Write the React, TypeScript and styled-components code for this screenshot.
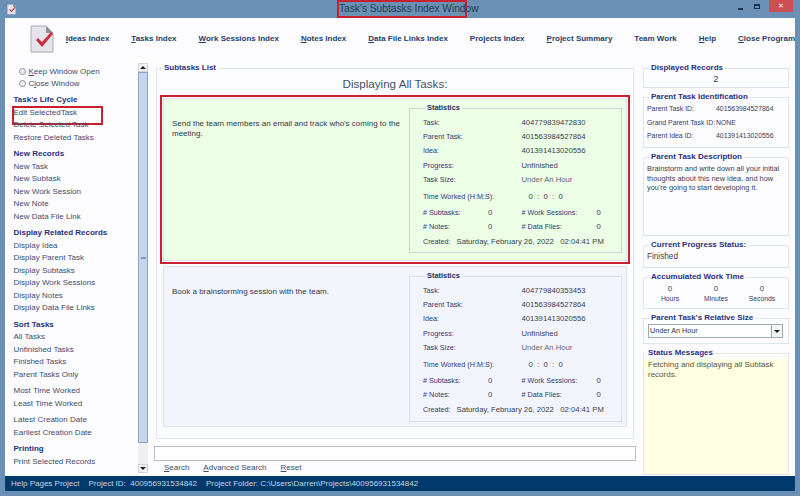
import React from 'react';
import styled, { createGlobalStyle } from 'styled-components';

const GlobalStyle = createGlobalStyle`
  html, body {
    margin: 0;
    padding: 0;
    width: 800px;
    height: 496px;
    overflow: hidden;
    font-family: 'Liberation Sans', Arial, sans-serif;
  }
  * { box-sizing: border-box; }
  u { text-decoration-thickness: 1px; text-underline-offset: 1px; }
`;

const toolbarLinks = [
  ['I', 'deas Index'],
  ['T', 'asks Index'],
  ['W', 'ork Sessions Index'],
  ['N', 'otes Index'],
  ['D', 'ata File Links Index'],
  ['', 'Projects Index'],
  ['P', 'roject Summary'],
  ['', 'Team Work'],
  ['H', 'elp'],
  ['C', 'lose Program'],
];

const navGroups: { title?: string; items: string[] }[] = [
  { title: "Task's Life Cycle", items: ['Edit SelectedTask', 'Delete Selected Task', 'Restore Deleted Tasks'] },
  { title: 'New Records', items: ['New Task', 'New Subtask', 'New Work Session', 'New Note', 'New Data File Link'] },
  {
    title: 'Display Related Records',
    items: ['Display Idea', 'Display Parent Task', 'Display Subtasks', 'Display Work Sessions', 'Display Notes', 'Display Data File Links'],
  },
  { title: 'Sort Tasks', items: ['All Tasks', 'Unfinished Tasks', 'Finished Tasks', 'Parent Tasks Only'] },
  { items: ['Most Time Worked', 'Least Time Worked'] },
  { items: ['Latest Creation Date', 'Earliest Creation Date'] },
  { title: 'Printing', items: ['Print Selected Records'] },
];

const tasks = [
  {
    id: '404779839472830',
    text: "Send the team members an email and track who's coming to the meeting.",
    selected: true,
  },
  {
    id: '404779840353453',
    text: 'Book a brainstorming session with the team.',
    selected: false,
  },
];

const DocIcon = ({ size }: { size: number }) => (
  <svg width={size} height={size * 1.17} viewBox="0 0 24 28">
    <path d="M1 1h15l7 7v19H1z" fill="#e4e4ea" stroke="#a9aab4" strokeWidth="1" />
    <path d="M16 1v7h7z" fill="#8e9099" />
    <path d="M6 15l2-2 4 4 9-10 2 2-11 13z" fill="#c8303f" />
  </svg>
);

const TaskCard = ({ task }: { task: (typeof tasks)[number] }) => (
  <CardFrame $selected={task.selected}>
    <Card $selected={task.selected}>
      <CardText>{task.text}</CardText>
      <StatsBox $selected={task.selected}>
        <Legend $small>Statistics</Legend>
        <StatRow>
          <StatLabel>Task:</StatLabel>
          <StatValue>{task.id}</StatValue>
        </StatRow>
        <StatRow>
          <StatLabel>Parent Task:</StatLabel>
          <StatValue>401563984527864</StatValue>
        </StatRow>
        <StatRow>
          <StatLabel>Idea:</StatLabel>
          <StatValue>401391413020556</StatValue>
        </StatRow>
        <StatRow>
          <StatLabel>Progress:</StatLabel>
          <StatValue>Unfinished</StatValue>
        </StatRow>
        <StatRow>
          <StatLabel>Task Size:</StatLabel>
          <StatValue $muted>Under An Hour</StatValue>
        </StatRow>
        <StatRow $spaced>
          <StatLabel>Time Worked (H:M:S):</StatLabel>
          <TimeValue>0 &nbsp;:&nbsp; 0 &nbsp;:&nbsp; 0</TimeValue>
        </StatRow>
        <StatRow $spaced>
          <CountLabel>
            # Subtasks:
          </CountLabel>
          <CountValue>0</CountValue>
          <CountLabelWide># Work Sessions:</CountLabelWide>
          <StatValue>0</StatValue>
        </StatRow>
        <StatRow>
          <CountLabel># Notes:</CountLabel>
          <CountValue>0</CountValue>
          <CountLabelWide># Data Files:</CountLabelWide>
          <StatValue>0</StatValue>
        </StatRow>
        <StatRow>
          <CreatedLabel>Created:</CreatedLabel>
          <StatValue>Saturday, February 26, 2022 &nbsp; 02:04:41 PM</StatValue>
        </StatRow>
      </StatsBox>
    </Card>
  </CardFrame>
);

const App = () => (
  <Frame>
    <GlobalStyle />
    <TitleBar>
      <AppIcon>
        <DocIcon size={9} />
      </AppIcon>
      <TitleBox>Task's Subtasks Index Window</TitleBox>
      <WindowButtons>
        <Minimize />
        <Maximize />
        <CloseButton>✕</CloseButton>
      </WindowButtons>
    </TitleBar>
    <Body>
      <Toolbar>
        <ToolbarIcon>
          <DocIcon size={24} />
        </ToolbarIcon>
        <ToolbarLinks>
          {toolbarLinks.map(([key, rest]) => (
            <ToolbarLink key={key + rest}>
              {key && <u>{key}</u>}
              {rest}
            </ToolbarLink>
          ))}
        </ToolbarLinks>
      </Toolbar>
      <Main>
        <Nav>
          <NavGroup>
            <RadioRow>
              <Radio />
              <span>
                <u>K</u>eep Window Open
              </span>
            </RadioRow>
            <RadioRow>
              <Radio />
              <span>
                C<u>l</u>ose Window
              </span>
            </RadioRow>
          </NavGroup>
          {navGroups.map((group, index) => (
            <NavGroup key={index}>
              {group.title && <NavTitle>{group.title}</NavTitle>}
              {group.items.map((item) => (
                <NavItem key={item} $marked={item === 'Edit SelectedTask'}>
                  {item}
                </NavItem>
              ))}
            </NavGroup>
          ))}
        </Nav>
        <ScrollBar>
          <ScrollButton>
            <ArrowUp />
          </ScrollButton>
          <ScrollThumb>
            <ThumbGrip />
          </ScrollThumb>
          <ScrollTrack />
          <ScrollButton>
            <ArrowDown />
          </ScrollButton>
        </ScrollBar>
        <Center>
          <ListBox>
            <Legend>Subtasks List</Legend>
            <ListHeading>Displaying All Tasks:</ListHeading>
            {tasks.map((task) => (
              <TaskCard key={task.id} task={task} />
            ))}
          </ListBox>
          <SearchInput />
          <SearchLinks>
            <SearchLink>
              <u>S</u>earch
            </SearchLink>
            <SearchLink>
              <u>A</u>dvanced Search
            </SearchLink>
            <SearchLink>
              <u>R</u>eset
            </SearchLink>
          </SearchLinks>
        </Center>
        <Side>
          <SideBox $height={25}>
            <Legend>Displayed Records</Legend>
            <RecordCount>2</RecordCount>
          </SideBox>
          <SideBox $height={56}>
            <Legend>Parent Task Identification</Legend>
            <IdRow>
              <IdLabel>Parent Task ID:</IdLabel>
              <IdValue>401563984527864</IdValue>
            </IdRow>
            <IdRow>
              <IdLabel>Grand Parent Task ID:</IdLabel>
              <IdValue>NONE</IdValue>
            </IdRow>
            <IdRow>
              <IdLabel>Parent Idea ID:</IdLabel>
              <IdValue>401391413020556</IdValue>
            </IdRow>
          </SideBox>
          <SideBox $height={84}>
            <Legend>Parent Task Description</Legend>
            <SideText>
              Brainstorm and write down all your initial thoughts about this new idea, and how you're going to start developing it.
            </SideText>
          </SideBox>
          <SideBox $height={28}>
            <Legend>Current Progress Status:</Legend>
            <StatusValue>Finished</StatusValue>
          </SideBox>
          <SideBox $height={37}>
            <Legend>Accumulated Work Time</Legend>
            <WorkTime>
              {['Hours', 'Minutes', 'Seconds'].map((unit) => (
                <WorkUnit key={unit}>
                  <span>0</span>
                  <WorkUnitLabel>{unit}</WorkUnitLabel>
                </WorkUnit>
              ))}
            </WorkTime>
          </SideBox>
          <SideBox $height={31}>
            <Legend>Parent Task's Relative Size</Legend>
            <Combo>
              <ComboText>Under An Hour</ComboText>
              <ComboButton>
                <ArrowDown />
              </ComboButton>
            </Combo>
          </SideBox>
          <MessageBox>
            <Legend>Status Messages</Legend>
            <MessageText>Fetching and displaying all Subtask records.</MessageText>
          </MessageBox>
        </Side>
      </Main>
      <StatusBar>
        <span>Help Pages Project</span>
        <span>Project ID: &nbsp;400956931534842</span>
        <span>Project Folder: C:\Users\Darren\Projects\400956931534842</span>
      </StatusBar>
    </Body>
  </Frame>
);

export default App;

const Frame = styled.div`
  width: 800px;
  height: 496px;
  background: #6b90b5;
  display: flex;
  flex-direction: column;
  overflow: hidden;
`;

const TitleBar = styled.div`
  height: 18px;
  flex: none;
  display: flex;
  align-items: flex-start;
  padding: 0 7px 0 7px;
  position: relative;
`;

const AppIcon = styled.div`
  margin-top: 4px;
  line-height: 0;
`;

const TitleBox = styled.div`
  position: absolute;
  left: 337px;
  top: 0;
  width: 130px;
  height: 18px;
  border: 2px solid #c8202f;
  color: #24394f;
  font-size: 10.2px;
  line-height: 14px;
  text-align: center;
  white-space: nowrap;
`;

const WindowButtons = styled.div`
  margin-left: auto;
  display: flex;
  align-items: flex-start;
`;

const Minimize = styled.div`
  width: 5px;
  height: 2px;
  background: #1f3144;
  margin: 8px 11px 0 0;
`;

const Maximize = styled.div`
  width: 6px;
  height: 5px;
  border: 1px solid #1f3144;
  border-top-width: 2px;
  margin: 4px 9px 0 0;
`;

const CloseButton = styled.div`
  width: 24px;
  height: 12px;
  background: #cb4f53;
  color: #fff;
  font-size: 7px;
  line-height: 12px;
  text-align: center;
`;

const Body = styled.div`
  flex: 1;
  min-height: 0;
  margin: 0 5px 5px;
  background: #fdfdff;
  display: flex;
  flex-direction: column;
`;

const Toolbar = styled.div`
  height: 45px;
  flex: none;
  display: flex;
  align-items: center;
  padding-left: 25px;
`;

const ToolbarIcon = styled.div`
  width: 46px;
  line-height: 0;
  margin-top: -2px;
`;

const ToolbarLinks = styled.div`
  display: flex;
  gap: 22px;
  margin-top: -4px;
`;

const ToolbarLink = styled.div`
  font-size: 8px;
  font-weight: 700;
  color: #24406e;
  white-space: nowrap;
`;

const Main = styled.div`
  flex: 1;
  min-height: 0;
  display: flex;
`;

const Nav = styled.div`
  width: 133px;
  flex: none;
  padding: 2px 0 0 8.5px;
  display: flex;
  flex-direction: column;
  gap: 4px;
  font-size: 8px;
  color: #414c69;
`;

const NavGroup = styled.div`
  display: flex;
  flex-direction: column;
`;

const NavTitle = styled.div`
  height: 12.5px;
  line-height: 12.5px;
  font-weight: 700;
  color: #2b2f80;
  white-space: nowrap;
`;

const NavItem = styled.div<{ $marked?: boolean }>`
  height: 12.5px;
  line-height: 12.5px;
  white-space: nowrap;
  position: relative;

  ${(p) =>
    p.$marked &&
    `
    &::after {
      content: '';
      position: absolute;
      left: -1.5px;
      top: -1px;
      width: 87px;
      height: 15px;
      border: 2px solid #c8202f;
    }
  `}
`;

const RadioRow = styled.div`
  height: 12.5px;
  display: flex;
  align-items: center;
  gap: 3px;
  padding-left: 5px;
  white-space: nowrap;
`;

const Radio = styled.span`
  width: 7px;
  height: 7px;
  border-radius: 50%;
  border: 1px solid #8d93a3;
  background: #eceef3;
`;

const ScrollBar = styled.div`
  width: 10px;
  flex: none;
  display: flex;
  flex-direction: column;
  background: #eef0f4;
  margin-bottom: 3px;
`;

const ScrollButton = styled.div`
  height: 9px;
  flex: none;
  display: flex;
  align-items: center;
  justify-content: center;
  background: #f1f2f5;
  border: 1px solid #d0d4dc;
`;

const ArrowUp = styled.span`
  width: 0;
  height: 0;
  border-left: 3px solid transparent;
  border-right: 3px solid transparent;
  border-bottom: 3px solid #222;
`;

const ArrowDown = styled.span`
  width: 0;
  height: 0;
  border-left: 3px solid transparent;
  border-right: 3px solid transparent;
  border-top: 3px solid #222;
`;

const ScrollThumb = styled.div`
  height: 371px;
  flex: none;
  display: flex;
  align-items: center;
  justify-content: center;
  background: #c4d7ee;
  border: 1px solid #8aa6c6;
`;

const ThumbGrip = styled.span`
  width: 5px;
  height: 2px;
  border-top: 1px solid #7f97b4;
  border-bottom: 1px solid #7f97b4;
`;

const ScrollTrack = styled.div`
  flex: 1;
`;

const Center = styled.div`
  width: 482px;
  flex: none;
  margin-left: 6px;
  display: flex;
  flex-direction: column;
`;

const Group = styled.fieldset`
  margin: 0;
  min-width: 0;
  border: 1px solid #dfe6f1;
  padding: 0 3px;
`;

const Legend = styled.legend<{ $small?: boolean }>`
  margin-left: ${(p) => (p.$small ? '2px' : '2px')};
  padding: 0 2px;
  height: 10px;
  line-height: 10px;
  font-size: ${(p) => (p.$small ? '7.4px' : '8px')};
  font-weight: 700;
  color: ${(p) => (p.$small ? '#27305f' : '#2b2f80')};
  white-space: nowrap;
`;

const ListBox = styled(Group)`
  height: 376px;
  margin: 0 2px;
  flex: none;
`;

const ListHeading = styled.div`
  height: 21px;
  margin-top: 1px;
  font-size: 11.6px;
  line-height: 20px;
  color: #3f5068;
  text-align: center;
`;

const CardFrame = styled.div<{ $selected: boolean }>`
  margin: 0 ${(p) => (p.$selected ? '0' : '0')} 2px;
  padding: ${(p) => (p.$selected ? '1px' : '0 3px')};
  border: ${(p) => (p.$selected ? '2px solid #c8202f' : 'none')};
`;

const Card = styled.div<{ $selected: boolean }>`
  height: ${(p) => (p.$selected ? '163px' : '161px')};
  background: ${(p) => (p.$selected ? '#ecfee6' : '#f3f5fd')};
  border: 1px solid #dde2ee;
  display: flex;
  padding: 4px 4px 0 8px;
`;

const CardText = styled.div`
  width: 237px;
  flex: none;
  padding-top: 16px;
  font-size: 8px;
  line-height: 9.6px;
  color: #30384a;
`;

const StatsBox = styled.fieldset<{ $selected: boolean }>`
  flex: 1;
  margin: 0;
  min-width: 0;
  height: ${(p) => (p.$selected ? '150px' : '151px')};
  padding: 2px 0 0 13px;
  border: 1px solid ${(p) => (p.$selected ? '#c9d9cf' : '#d9dfec')};
`;

const StatRow = styled.div<{ $spaced?: boolean }>`
  height: 14.4px;
  margin-top: ${(p) => (p.$spaced ? '2px' : '0')};
  display: flex;
  align-items: center;
  white-space: nowrap;
`;

const StatLabel = styled.span`
  width: 98.5px;
  flex: none;
  font-size: 7.2px;
  color: #2f3a72;
`;

const CountLabel = styled(StatLabel)`
  width: 65px;
`;

const CountLabelWide = styled(StatLabel)`
  width: 75px;
`;

const CreatedLabel = styled(StatLabel)`
  width: 33.5px;
`;

const StatValue = styled.span<{ $muted?: boolean }>`
  font-size: 7.7px;
  color: ${(p) => (p.$muted ? '#626a6c' : '#3a4150')};
`;

const TimeValue = styled(StatValue)`
  padding-left: 7px;
`;

const CountValue = styled(StatValue)`
  width: 33.5px;
  flex: none;
`;

const SearchInput = styled.div`
  height: 15px;
  flex: none;
  margin-top: 7px;
  background: #fff;
  border: 1px solid #b9bdc4;
`;

const SearchLinks = styled.div`
  display: flex;
  gap: 14px;
  padding: 2px 0 0 10px;
`;

const SearchLink = styled.span`
  font-size: 8px;
  color: #3f4d69;
`;

const Side = styled.div`
  width: 146px;
  flex: none;
  margin-left: 7px;
  display: flex;
  flex-direction: column;
  gap: 4px;
`;

const SideBox = styled(Group)<{ $height: number }>`
  height: ${(p) => p.$height}px;
  flex: none;
`;

const RecordCount = styled.div`
  font-size: 9.5px;
  line-height: 12px;
  text-align: center;
  color: #3a4150;
`;

const IdRow = styled.div`
  height: 13.4px;
  display: flex;
  align-items: center;
  white-space: nowrap;
  font-size: 6.9px;
`;

const IdLabel = styled.span`
  width: 69px;
  flex: none;
  color: #2f3a72;
`;

const IdValue = styled.span`
  color: #3a4150;
`;

const SideText = styled.div`
  padding-top: 2px;
  font-size: 7.4px;
  line-height: 9.6px;
  color: #3a4150;
`;

const StatusValue = styled.div`
  font-size: 8.2px;
  line-height: 13px;
  color: #3a4150;
`;

const WorkTime = styled.div`
  display: grid;
  grid-template-columns: repeat(3, 1fr);
  padding-top: 2px;
`;

const WorkUnit = styled.div`
  display: flex;
  flex-direction: column;
  align-items: center;
  font-size: 7.7px;
  line-height: 9.5px;
  color: #3a4150;
`;

const WorkUnitLabel = styled.span`
  font-size: 6.8px;
  color: #2f3a72;
`;

const Combo = styled.div`
  height: 14px;
  margin: 1px 2px 0 1px;
  display: flex;
  background: #fff;
  border: 1px solid #a3a9b3;
`;

const ComboText = styled.div`
  flex: 1;
  padding-left: 1px;
  font-size: 7.2px;
  line-height: 12px;
  color: #333;
`;

const ComboButton = styled.div`
  width: 11px;
  display: flex;
  align-items: center;
  justify-content: center;
  border-left: 1px solid #a3a9b3;
  background: #f4f5f7;
`;

const MessageBox = styled(Group)`
  height: 127px;
  flex: none;
  padding: 0;
  background: linear-gradient(#fdfdff 5px, #ffffe3 5px);
`;

const MessageText = styled.div`
  padding: 2px 4px;
  font-size: 8px;
  line-height: 9.6px;
  color: #54583e;
`;

const StatusBar = styled.div`
  height: 15px;
  flex: none;
  background: #003a6c;
  color: #c6d6e6;
  font-size: 8px;
  display: flex;
  align-items: center;
  gap: 9px;
  padding-left: 6px;
  white-space: nowrap;
`;
